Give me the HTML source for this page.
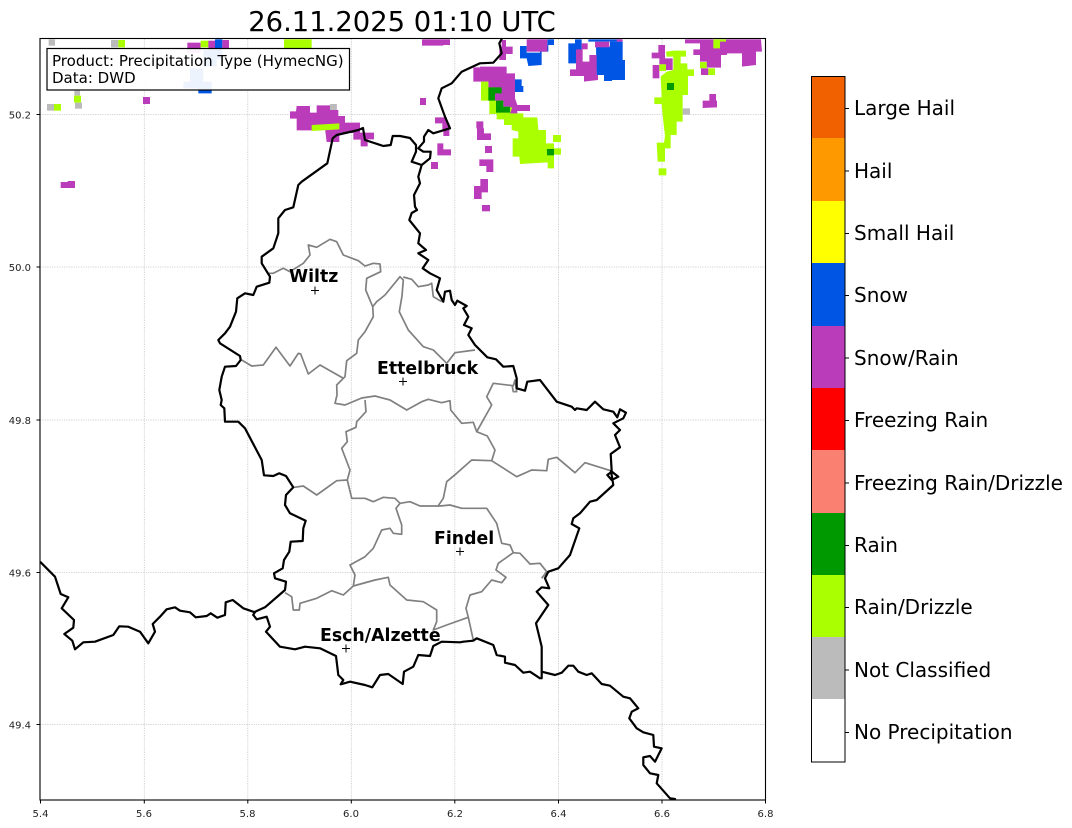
<!DOCTYPE html>
<html><head><meta charset="utf-8"><style>
html,body{margin:0;padding:0;background:#fff;width:1072px;height:828px;overflow:hidden}
svg{display:block}
text{font-family:"DejaVu Sans","Liberation Sans",sans-serif;fill:#000}
.t{font-size:10px;fill:#222}
.c{font-size:17.33px;font-weight:bold}
.l{font-size:20px}
.grid line{stroke:#c4c4c4;stroke-width:.8;stroke-dasharray:1.2 1.2}
</style></head><body>
<svg width="1072" height="828" viewBox="0 0 1072 828" xmlns="http://www.w3.org/2000/svg">
<rect width="1072" height="828" fill="#fff"/>
<text x="402" y="31" text-anchor="middle" style="font-size:27.4px">26.11.2025 01:10 UTC</text>

<g class="grid">
<line x1="144.3" y1="39" x2="144.3" y2="800"/><line x1="247.8" y1="39" x2="247.8" y2="800"/><line x1="351.3" y1="39" x2="351.3" y2="800"/><line x1="454.8" y1="39" x2="454.8" y2="800"/><line x1="558.5" y1="39" x2="558.5" y2="800"/><line x1="662" y1="39" x2="662" y2="800"/>
<line x1="40" y1="114.5" x2="765" y2="114.5"/><line x1="40" y1="267" x2="765" y2="267"/><line x1="40" y1="420" x2="765" y2="420"/><line x1="40" y1="572.5" x2="765" y2="572.5"/><line x1="40" y1="724.5" x2="765" y2="724.5"/>
</g>

<!-- radar left -->
<g transform="translate(40 30) scale(.33333)">
<rect x="26" y="28" width="19" height="19" fill="#bbb"/>
<rect x="213" y="30" width="22" height="22" fill="#bbb"/><rect x="235" y="30" width="20" height="22" fill="#aaff00"/>
<rect x="442" y="38" width="40" height="30" fill="#bb3cbb"/><rect x="482" y="32" width="23" height="20" fill="#aaff00"/><rect x="505" y="32" width="20" height="30" fill="#bb3cbb"/><rect x="525" y="28" width="22" height="60" fill="#0055e5"/><rect x="547" y="30" width="20" height="28" fill="#bb3cbb"/>
<rect x="732" y="28" width="83" height="30" fill="#aaff00"/>
<path d="M490 60h40v50h-40zM450 115h40v40h-40zM430 155h60v20h-60zM475 155h40v35h-40z" fill="#0055e5"/>
<rect x="103" y="182" width="17" height="15" fill="#bbb"/><rect x="102" y="197" width="21" height="21" fill="#aaff00"/><rect x="105" y="218" width="21" height="18" fill="#bbb"/>
<rect x="21" y="222" width="21" height="20" fill="#bbb"/><rect x="42" y="222" width="21" height="20" fill="#aaff00"/>
<rect x="309" y="201" width="21" height="21" fill="#bb3cbb"/>
<path d="M62 456h21v-3h22v21H62z" fill="#bb3cbb"/>
<path d="M770 228h40v20h20v-22h40v-4h20v18h5v18h20v20h45v30h42v20h-19v21h-21v-20h-22v-20h-42v27h-38l-5-40-40 5h-45v-35h-20v-22h18z" fill="#bb3cbb"/>
<rect x="870" y="222" width="20" height="18" fill="#bbb"/>
<path d="M815 285l83-5v18l-83 5z" fill="#aaff00"/>
</g>

<!-- radar right -->
<g transform="translate(400 30) scale(.33333)">
<path d="M66 28h84v17h-20v2H66z" fill="#bb3cbb"/>
<rect x="442" y="28" width="20" height="17" fill="#0055e5"/>
<path d="M360 48h20v20h40v-23h25v20h-20v40l-40 3-5-23h-20z" fill="#0055e5"/>
<rect x="380" y="28" width="62" height="37" fill="#bb3cbb"/>
<path d="M305 30h13v20h20v22h-20v18h-20V50h7z" fill="#bb3cbb"/>
<path d="M220 112h20v-2h80v20h25v75l7 20h38v18h-38v20h-22v-33h-20v-17h-25v-23h-20v-35h-45z" fill="#bb3cbb"/>
<path d="M345 148h20v20h5v18h-25z" fill="#0055e5"/>
<path d="M330 250h40v12h42l3 38h23v40h24v75h-19v-18l-83 5-2-22h-20v-55h17v-20l-20-5v-15h-23v-17h-22v-16h-22v-40h-25v-57h22v17h20v40h22v20h30z" fill="#aaff00"/>
<path d="M265 172h40v18h-20v22h-20z" fill="#009900"/>
<path d="M288 212h22v18h20v18h-42z" fill="#009900"/>
<rect x="441" y="357" width="21" height="19" fill="#009900"/>
<rect x="462" y="355" width="21" height="19" fill="#aaff00"/><rect x="459" y="315" width="24" height="21" fill="#aaff00"/>
<g fill="#bb3cbb">
<rect x="60" y="204" width="18" height="21"/>
<path d="M105 262h35v18h8v38h-18v-20h-3v-18h-22z"/>
<path d="M112 340h18v18h23v18h-41z"/>
<rect x="93" y="396" width="21" height="21"/>
<path d="M229 274h21v21h2v15h21v20h-42v-35h-2z"/>
<rect x="255" y="348" width="21" height="21"/>
<path d="M238 388h42v38h-21v-18h-21z"/>
<path d="M241 447h23v40h-19v20h-23v-39h19z"/>
<rect x="246" y="525" width="24" height="19"/>
</g>
<path d="M505 40h20V28h20v32h-17v40h-23z" fill="#0055e5"/>
<path d="M565 28h100v7h-100z" fill="#0055e5"/>
<path d="M588 50h42V35h38v55h7v60h-39v3h-24v-18h-22z" fill="#0055e5"/>
<path d="M528 58h20v37h20V75h22v60h4v15l-42 5v-17h-42v-20h18z" fill="#bb3cbb"/>
<rect x="585" y="35" width="43" height="17" fill="#bb3cbb"/><rect x="545" y="40" width="18" height="18" fill="#bb3cbb"/><rect x="650" y="28" width="18" height="7" fill="#bb3cbb"/>
<path d="M775 45h20v23h0v17h23v35h-20v-17h-20v-18h-23V68h20z" fill="#bb3cbb"/>
<path d="M758 105h20v40h-20z" fill="#bb3cbb"/>
<path d="M822 62h36v18h-16v20h20v18h20v20h-18v57h-16v80h-18v40h-18v40h-17v40h-22l-3-57h22l3-20-5-43-5-53h-22v-20h22l-3-62 18-15 20-5V80h-20l-2-15z" fill="#aaff00"/>
<rect x="778" y="103" width="20" height="20" fill="#aaff00"/>
<rect x="801" y="159" width="21" height="21" fill="#009900"/>
<rect x="776" y="415" width="23" height="21" fill="#aaff00"/>
<rect x="848" y="235" width="22" height="19" fill="#bbb"/>
<path d="M855 28h228l3 37h-18v40l-42 5V70h-44l-2 5h-17v38h-43V95h-20V75h-20V58h20V40h-45z" fill="#bb3cbb"/>
<path d="M940 28h38v7h-18v20h-20z" fill="#aaff00"/>
<rect x="900" y="96" width="20" height="19" fill="#aaff00"/><rect x="903" y="115" width="22" height="20" fill="#bb3cbb"/><rect x="925" y="115" width="20" height="20" fill="#aaff00"/>
<path d="M928 192h20v20h3v20l-43 2v-22h20z" fill="#bb3cbb"/>
</g>

<!-- cantons -->
<g fill="none" stroke="#808080" stroke-width="1.7" stroke-linejoin="round">
<path d="M268.3 273.3L273.3 273.3 283.3 268.3 290 271.7 303.3 263.3 310 255 308.3 245 316.7 247.3 330 239.3 336.7 241.7 343.3 255 358.3 260.7 365 266 373.3 263.3 380 264 380.7 271.7 366.7 278.3 365.7 290 372.7 306.7 373.3 316.7 365 331.7 358.3 340 356.7 353.3 346.7 360.7 345 376.7 336.7 385 337 395 335 403.3 345 405 361.7 398 375 396 390 400 406.7 410 421.7 401.7 428.3 399.3 441.7 402.7 450 400.7 450.7 410 461.7 423.3 473.3 422.3 476.7 431.7 487.3 436 495 450 491.7 460.7 516.7 476.7 531.7 470 546.7 470.7 548.3 459.3 556.7 457.3 575 472.7 585 462.7 610.7 470.7"/>
<path d="M241.7 360L251.7 366 263.3 365 276 347.3 290 366 298.3 353.3 300.7 354 308.3 374 320 365 343.3 378.3"/>
<path d="M372.7 306.7L376.7 301.7 385 295 400 276.7 403.3 280 402 296 399.3 311.7 408.3 330 423.3 346.7 433.3 350 446.7 363.3 455 352.7 475 350"/>
<path d="M403.3 277L411.7 279.3 418.3 286.7 428.3 285 431.7 283.3 433.3 296.7 441.7 301.7"/>
<path d="M476.7 431.7L491.7 405 486.7 396.7 493.3 383.3 513.3 385.7 515 380 516.7 391.7 513.3 391.7 512 385"/>
<path d="M491.7 460.7L471.7 460 456.7 473.3 446.7 481.7 443.3 498.3 438.3 505.7"/>
<path d="M365 400L366 411.7 356.7 421.7 356 427.3 346 431.7 347.3 441.7 341.7 448.3 350 470 347.3 480 351.7 498.3 365 498.3 373.3 501.7 383.3 497.3 395 498.3 400 503.3 410 501.7 420 506 440 506 450 505 461.7 508.3 486.7 508.3 496.7 523.3 501.7 543.3 510 545 513.3 552.7 520 553.3 530 564 540 563.3 546.7 571.7 541.7 578.3"/>
<path d="M294.3 487.3L303.3 486 316.7 495 336.7 480.7 347.3 480"/>
<path d="M400 503.3L396 508.3 401.7 525 401.7 534.3 393.3 533.3 390 528.3 381.7 530 373.3 548.3 365 556.7 350 565 355 575 353.3 586"/>
<path d="M285 592.7L291.7 596.7 293.3 610 299.3 610 300 603.3 316.7 598.3 331.7 590.7 343.3 595 353.3 586 375 580 388.3 577.3 390 585 406.7 600 423.3 601.7 436.7 610 436.7 621.7 433.3 630 446.7 625 468.3 617.3 473.3 640"/>
<path d="M513.3 552.7L498.3 563.3 496 570 506 577.3 501.7 582.7 491.7 580 481.7 591.7 470 595 466 608.3 468.3 617.3"/>
</g>

<!-- borders -->
<g fill="none" stroke="#000" stroke-width="2.2" stroke-linejoin="round" stroke-linecap="round">
<path d="M40.7 562.3L55 576.7 60.7 594 68.3 597.3 61.7 608.3 74 620 73.3 627.7 64.3 634 72.3 640.7 75 649.3 83.3 642.3 95 641.7 113.3 635 119.3 626.3 128.3 626.7 140 631.7 148.3 643.3 155 631.7 152.7 624 160 616.7 166.7 609.3 175 607.3 180 610.7 190 612.3 195.7 617.3 206.7 616 210.7 613.3 217.3 617.7 225 615 225.7 602.3 232.7 600 243.3 608.3 255 612.3"/>
<path d="M253.3 615L255 611.7 265 607.3 285 590 286 581.7 275 578.3 274 573.3 282.7 568.3 284 560 289.3 551.7 290.7 541.7 302.7 541 303.3 528.3 305.7 520.7 290 513.3 285 505 286 495 293.3 487.3 286 476 279.3 473.3 273.3 476 264 475.3 261.7 460 245 428.3 238.3 421.7 225 421.7 224.3 408.3 220.7 405 221.7 400 219.3 390 221.7 376.7 225 366.7 236 366 240.7 360 240 356 220 343.3 218.3 340 225 333.3 230 326.7 236 311.7 237.3 298.3 245 293.3 253.3 295 256.7 286.7 269.3 282.7 270 276.7 261.7 263.3 261.7 256.7 273.3 248.3 278.3 233.3 278.3 218.3 285 210 293.3 207.3 298.3 185 301.7 181.7 327.3 163.3 332.7 138.3 336.7 135 358.3 130 363 128 365 140 383.3 146 390.7 145 392.7 136 400 136 410 138 416 145 416 151.7 411.7 161.7 421.7 165 430 158.3 430.7 151.7 423.3 151.7 418.3 148.3 424 141.7 424 136.7 428.3 130 433.3 133.3 450 128.3 445 116.7 438.3 98.3 441.7 88.3 451.7 83.3 461.7 71.7 480 63.3 493.3 62.7 501.7 53.3 499.3 43.3 501.7 39"/>
<path d="M421.7 165L418.3 176.7 420 183.3 414 195 415 206.7 417 210 411.7 213 409.3 220 420 233.3 418.3 243.3 426 250 418.3 253.3 428.3 260 422.7 268.3 430 273.3 440 278.3 436.7 290 443.3 301.7 445 291.7 450 290.7 451.7 300 455 305 457.3 300.7 466.7 306 463.3 308.3 468.3 316.7 464 325 471.7 328.3 468.3 335 475 345 487.3 357.3 496 359.3 503.3 366.7 513.3 366 516.7 378.3 516.7 388.3 525 390.7 527.3 381.7 540 380 556.7 401.7 571.7 406.7 575 410 576.7 408.3 586.7 410 595 401.7 603.3 409.3 613.3 411.7 617.3 417.3 620 409.3 626 412.7 623.3 418.3 613.3 423.3 620 430 615 435 620 447.3 610.7 454 611.7 471.7 607.3 475 611.7 480 618.3 476.7 611 471 613.3 485 596.7 500 590 501.7 580 513.3 573.3 518.3 571.7 524 579.3 528.3 570 555 558.3 568.3 548.3 571.7 545 578.3 549.3 588.3 541.7 587.3 536.7 591.7 548.3 605 536 623.3 541.7 646.7 541.7 678.3"/>
<path d="M253.3 615L256.7 619.3 266.7 616.7 270 626.7 266 631.7 280 646.7 295 649.3 305 646.7 320 648.3 336 656 338.3 675 343.3 680 340.7 684.3 350 681.7 365 685 372.3 687.3 380 675 388.3 674 402.7 684 404 671.7 413.3 666.7 418.3 655 430 656 433.3 646 441.7 641.7 460 642.3 463.3 641.7 473.3 640.7 476.7 638.3 493.3 645 496.7 655 505 656.7 505 662.7 515 665 523.3 672.7 530 671.7 540 678.3"/>
<path d="M541.7 671.7L555 675 561.7 672.7 568.3 665.7 573.3 665.7 578.3 671.7 586.7 675 591.7 673.3 601.7 684 610 685.7 623.3 696.7 630 698.3 638.3 708.3 631.7 711.7 629.3 718.3 636.7 728.3 643.3 732.3 653.3 735 654 746.7 661.7 748.3 655 761.7 650 756 643.3 757.3 643.3 765 650 773.3 658.3 775 656.7 783.3 670 798.3 675 799"/>
</g>

<!-- info box -->
<rect x="47" y="48.5" width="302.5" height="41.5" fill="#fff" fill-opacity=".93" stroke="#000" stroke-width="1.2"/>
<text x="52" y="66" style="font-size:15.03px">Product: Precipitation Type (HymecNG)</text>
<text x="52" y="83" style="font-size:15.03px">Data: DWD</text>

<!-- cities -->
<text class="c" x="289" y="282">Wiltz</text>
<text class="c" x="377" y="374">Ettelbruck</text>
<text class="c" x="434" y="544">Findel</text>
<text class="c" x="320" y="641">Esch/Alzette</text>
<g stroke="#000" stroke-width="1" fill="none">
<path d="M311 290.5h8M315 286.5v8M399 381.5h8M403 377.5v8M456 551.5h8M460 547.5v8M342 648.5h8M346 644.5v8"/>
</g>

<!-- axes -->
<rect x="40" y="38.5" width="725.5" height="761.5" fill="none" stroke="#000" stroke-width="1.1"/>
<g stroke="#000" stroke-width="1">
<path d="M40.5 800v3.5M144.3 800v3.5M247.8 800v3.5M351.3 800v3.5M454.8 800v3.5M558.5 800v3.5M662 800v3.5M765.5 800v3.5M40 114.5h-3.5M40 267h-3.5M40 420h-3.5M40 572.5h-3.5M40 724.5h-3.5"/>
</g>
<g class="t" text-anchor="middle">
<text class="t" x="40.5" y="817">5.4</text><text class="t" x="144" y="817">5.6</text><text class="t" x="247.5" y="817">5.8</text><text class="t" x="351" y="817">6.0</text><text class="t" x="455" y="817">6.2</text><text class="t" x="558.5" y="817">6.4</text><text class="t" x="662" y="817">6.6</text><text class="t" x="765.5" y="817">6.8</text>
</g>
<g text-anchor="end">
<text class="t" x="31" y="118.5">50.2</text><text class="t" x="31" y="271">50.0</text><text class="t" x="31" y="424">49.8</text><text class="t" x="31" y="576.5">49.6</text><text class="t" x="31" y="728.5">49.4</text>
</g>

<!-- colorbar -->
<g shape-rendering="crispEdges">
<rect x="811" y="76" width="34" height="62" fill="#f26100"/>
<rect x="811" y="138" width="34" height="63" fill="#ff9900"/>
<rect x="811" y="201" width="34" height="62" fill="#ffff00"/>
<rect x="811" y="263" width="34" height="63" fill="#0055e5"/>
<rect x="811" y="326" width="34" height="62" fill="#bb3cbb"/>
<rect x="811" y="388" width="34" height="62" fill="#ff0000"/>
<rect x="811" y="450" width="34" height="63" fill="#fa8072"/>
<rect x="811" y="513" width="34" height="62" fill="#009900"/>
<rect x="811" y="575" width="34" height="62" fill="#aaff00"/>
<rect x="811" y="637" width="34" height="62" fill="#bbbbbb"/>
<rect x="811" y="699" width="34" height="63" fill="#ffffff"/>
</g>
<rect x="811.5" y="76.5" width="33.5" height="685.5" fill="none" stroke="#000" stroke-width="1"/>
<path d="M845 108.5h4M845 171h4M845 233.5h4M845 295.5h4M845 358h4M845 420.5h4M845 483h4M845 545.5h4M845 607.5h4M845 670h4M845 732.5h4" stroke="#000" stroke-width="1"/>
<text class="l" x="854" y="115">Large Hail</text>
<text class="l" x="854" y="178">Hail</text>
<text class="l" x="854" y="240">Small Hail</text>
<text class="l" x="854" y="302">Snow</text>
<text class="l" x="854" y="365">Snow/Rain</text>
<text class="l" x="854" y="427">Freezing Rain</text>
<text class="l" x="854" y="490">Freezing Rain/Drizzle</text>
<text class="l" x="854" y="552">Rain</text>
<text class="l" x="854" y="614">Rain/Drizzle</text>
<text class="l" x="854" y="677">Not Classified</text>
<text class="l" x="854" y="739">No Precipitation</text>
</svg>
</body></html>
